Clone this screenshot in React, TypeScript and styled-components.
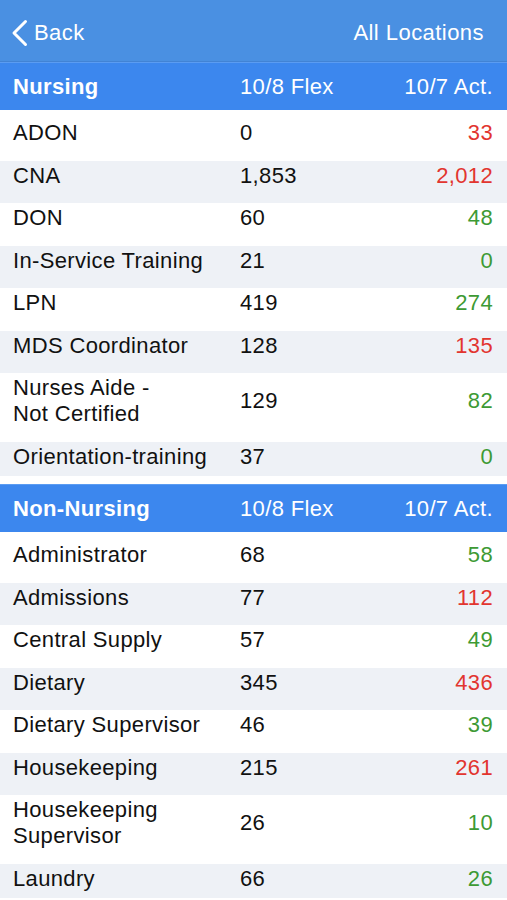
import React from "react";
import styled, { createGlobalStyle } from "styled-components";

const GlobalStyle = createGlobalStyle`
  html, body {
    margin: 0;
    padding: 0;
    background: #ffffff;
  }
  body {
    font-family: "Liberation Sans", Arial, Helvetica, sans-serif;
    font-size: 22px;
    letter-spacing: 0.35px;
    color: #111111;
    -webkit-font-smoothing: antialiased;
  }
`;

const Page = styled.div`
  width: 507px;
  min-height: 900px;
  background: #ffffff;
  overflow: hidden;
`;

const NavBar = styled.div`
  height: 62px;
  padding: 4px 23px 0 11px;
  box-sizing: border-box;
  background: #4a90e2;
  border-bottom: 1px solid #4283d4;
  display: flex;
  align-items: center;
  justify-content: space-between;
  color: #ffffff;
  letter-spacing: 0.45px;
`;

const BackButton = styled.div`
  display: flex;
  align-items: center;
  gap: 6px;
  line-height: 26px;
`;

const NavTitle = styled.div`
  line-height: 26px;
`;

const SectionHeader = styled.div`
  height: 48px;
  box-sizing: border-box;
  background: #3c87ee;
  border-top: 1px solid #5b9cf2;
  display: grid;
  grid-template-columns: 227px 1fr auto;
  align-items: center;
  padding: 0 14px 0 13px;
  color: #ffffff;
  line-height: 26px;
`;

const HeaderName = styled.div`
  font-weight: bold;
`;

const List = styled.div<{ $last?: boolean }>`
  padding-top: 8px;
  margin-bottom: ${(p) => (p.$last ? 0 : 8)}px;
`;

const Row = styled.div<{ $alt: boolean }>`
  display: grid;
  grid-template-columns: 227px 1fr auto;
  align-items: center;
  padding: 2px 14px 14.5px 13px;
  line-height: 26px;
  background: ${(p) => (p.$alt ? "#eef1f6" : "#ffffff")};

  &:last-child {
    padding-bottom: 6.5px;
  }
`;

const Name = styled.div`
  white-space: pre-line;
`;

const Value = styled.div``;

const Actual = styled.div<{ $good: boolean }>`
  text-align: right;
  color: ${(p) => (p.$good ? "#3d9a34" : "#e2352f")};
`;

type Item = { name: string; flex: string; act: string; good: boolean };

const nursing: Item[] = [
  { name: "ADON", flex: "0", act: "33", good: false },
  { name: "CNA", flex: "1,853", act: "2,012", good: false },
  { name: "DON", flex: "60", act: "48", good: true },
  { name: "In-Service Training", flex: "21", act: "0", good: true },
  { name: "LPN", flex: "419", act: "274", good: true },
  { name: "MDS Coordinator", flex: "128", act: "135", good: false },
  { name: "Nurses Aide -\nNot Certified", flex: "129", act: "82", good: true },
  { name: "Orientation-training", flex: "37", act: "0", good: true },
];

const nonNursing: Item[] = [
  { name: "Administrator", flex: "68", act: "58", good: true },
  { name: "Admissions", flex: "77", act: "112", good: false },
  { name: "Central Supply", flex: "57", act: "49", good: true },
  { name: "Dietary", flex: "345", act: "436", good: false },
  { name: "Dietary Supervisor", flex: "46", act: "39", good: true },
  { name: "Housekeeping", flex: "215", act: "261", good: false },
  { name: "Housekeeping\nSupervisor", flex: "26", act: "10", good: true },
  { name: "Laundry", flex: "66", act: "26", good: true },
];

const Chevron = () => (
  <svg width="17" height="28" viewBox="0 0 17 28" fill="none">
    <path
      d="M14.5 2.5 L3 14 L14.5 25.5"
      stroke="#ffffff"
      strokeWidth="3"
      strokeLinecap="round"
      strokeLinejoin="round"
    />
  </svg>
);

const Section = ({ title, items, last }: { title: string; items: Item[]; last?: boolean }) => (
  <>
    <SectionHeader>
      <HeaderName>{title}</HeaderName>
      <div>10/8 Flex</div>
      <div>10/7 Act.</div>
    </SectionHeader>
    <List $last={last}>
      {items.map((it, i) => (
        <Row key={it.name} $alt={i % 2 === 1}>
          <Name>{it.name}</Name>
          <Value>{it.flex}</Value>
          <Actual $good={it.good}>{it.act}</Actual>
        </Row>
      ))}
    </List>
  </>
);

export default function App() {
  return (
    <Page>
      <GlobalStyle />
      <NavBar>
        <BackButton>
          <Chevron />
          <span>Back</span>
        </BackButton>
        <NavTitle>All Locations</NavTitle>
      </NavBar>
      <Section title="Nursing" items={nursing} />
      <Section title="Non-Nursing" items={nonNursing} last />
    </Page>
  );
}
